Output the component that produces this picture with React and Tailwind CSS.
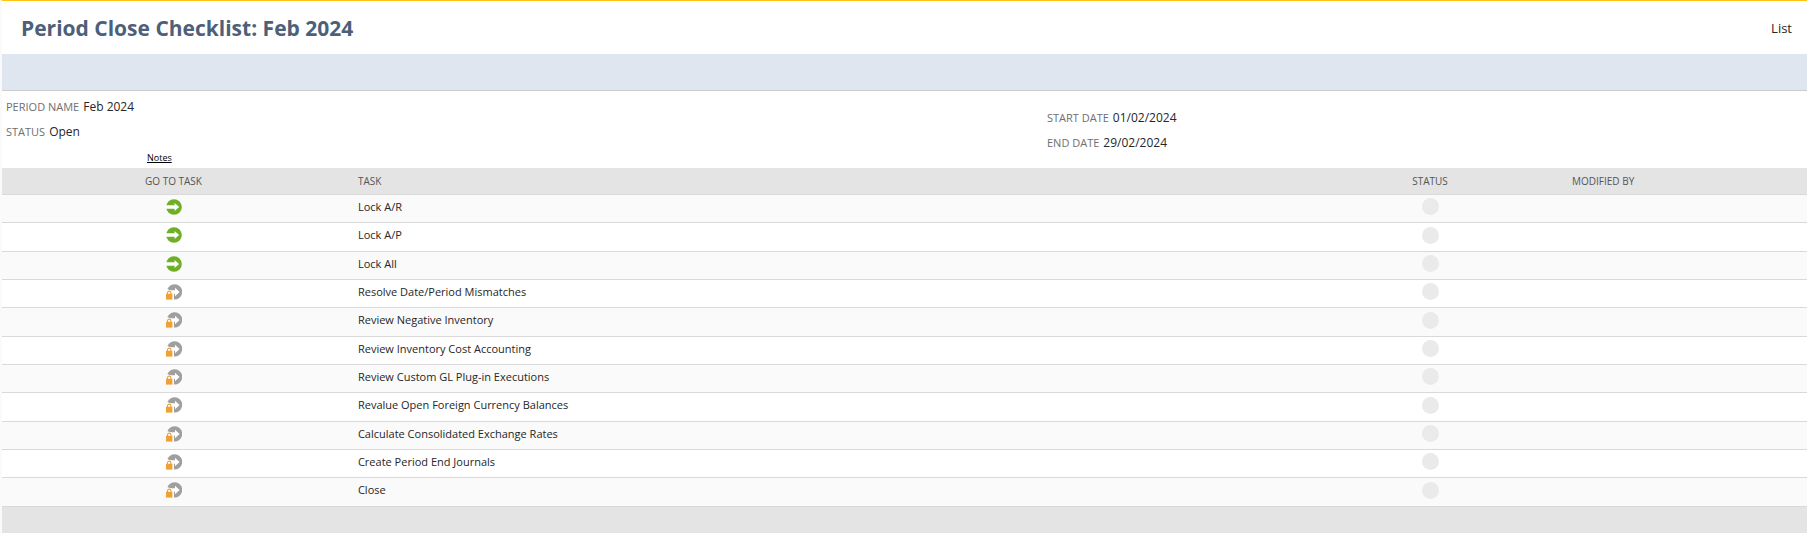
import React from 'react';

const tasks = [
  { name: 'Lock A/R', locked: false },
  { name: 'Lock A/P', locked: false },
  { name: 'Lock All', locked: false },
  { name: 'Resolve Date/Period Mismatches', locked: true },
  { name: 'Review Negative Inventory', locked: true },
  { name: 'Review Inventory Cost Accounting', locked: true },
  { name: 'Review Custom GL Plug-in Executions', locked: true },
  { name: 'Revalue Open Foreign Currency Balances', locked: true },
  { name: 'Calculate Consolidated Exchange Rates', locked: true },
  { name: 'Create Period End Journals', locked: true },
  { name: 'Close', locked: true },
];

const GoIcon = () => (
  <svg width="16" height="16" viewBox="0 0 16 16" className="block">
    <circle cx="8" cy="8" r="7.8" fill="#6eaf24" />
    <path d="M0 6.2h8.6V4L13.2 8l-4.6 4V9.8H0z" fill="#fff" />
  </svg>
);

const LockedIcon = () => (
  <svg width="16" height="16" viewBox="0 0 16 16" className="block">
    <path d="M1.4 5A7.7 7.7 0 1 1 8 15.6V8L1.4 5z" fill="#9f9f9f" />
    <path d="M3 6.2h6V3.8L13.6 8 9 12.2V9.8H3z" fill="#fff" />
    <path d="M1.5 10.5V8.8a1.7 1.7 0 0 1 3.4 0v1.7" fill="#fff" stroke="#efa133" strokeWidth="1.1" />
    <rect x="0" y="9.8" width="6.4" height="5.8" fill="#efa133" />
  </svg>
);

const Field = ({ label, value }) => (
  <div className="flex items-baseline gap-1 h-[25px]">
    <dt className="text-[11px] leading-5 text-[#6f6f6f]">{label}</dt>
    <dd className="text-xs leading-5 text-[#262626]">{value}</dd>
  </div>
);

const App = () => {
  return (
    <div className="bg-[#fafafa] pl-0.5 font-['Open_Sans',sans-serif]">
      <div className="bg-white border-t border-[#ffc20e]">
        <header className="flex items-center justify-between h-[53px] pt-0.5 pl-[19px] pr-[15px]">
          <h1 className="text-[21px] font-bold text-[#4d5f79]">Period Close Checklist: Feb 2024</h1>
          <a href="#list" className="text-[13px] text-[#262626]">List</a>
        </header>
        <div className="h-[37px] bg-[#dfe6ef] border-b border-[#cccccc]"></div>

        <div className="grid grid-cols-[1041px_1fr] pl-1 h-[60px]">
          <dl className="pt-1.5">
            <Field label="PERIOD NAME" value="Feb 2024" />
            <Field label="STATUS" value="Open" />
          </dl>
          <dl className="pt-[17px]">
            <Field label="START DATE" value="01/02/2024" />
            <Field label="END DATE" value="29/02/2024" />
          </dl>
        </div>
        <div className="h-[17px] pl-[145px] text-[9px] leading-[14px]">
          <a href="#notes" className="text-black underline">Notes</a>
        </div>

        <table className="w-full table-fixed border-collapse text-[#262626]">
          <thead>
            <tr className="h-[26px] bg-[#e4e4e4] border-b border-[#d9d9d9] text-[10px] text-[#545454]">
              <th className="w-[19%] p-0 pt-0.5 font-normal">GO TO TASK</th>
              <th className="p-0 pt-0.5 pl-[13px] font-normal text-left">TASK</th>
              <th className="w-44 p-0 pt-0.5 font-normal">STATUS</th>
              <th className="w-[289px] p-0 pt-0.5 pl-[54px] font-normal text-left">MODIFIED BY</th>
            </tr>
          </thead>
          <tbody>
            {tasks.map((task, index) => (
              <tr
                key={task.name}
                className={`border-b border-[#d9d9d9] ${index % 2 ? 'bg-white' : 'bg-[#fafafa]'} ${index % 3 === 1 ? 'h-[29px]' : 'h-7'}`}
              >
                <td className="p-0 pl-px pb-[3px]">
                  {task.locked ? (
                    <div className="flex justify-center"><LockedIcon /></div>
                  ) : (
                    <a href="#task" aria-label={`Go to ${task.name}`} className="flex justify-center"><GoIcon /></a>
                  )}
                </td>
                <td className="p-0 pl-[13px] pb-[3px] text-[11px] leading-4">{task.name}</td>
                <td className="p-0 pb-[3px]">
                  <div className="mx-auto size-[17px] rounded-full bg-[#eaeaea]"></div>
                </td>
                <td className="p-0"></td>
              </tr>
            ))}
          </tbody>
        </table>
        <div className="h-[27px] bg-[#e4e4e4]"></div>
      </div>
    </div>
  );
};

export default App;
